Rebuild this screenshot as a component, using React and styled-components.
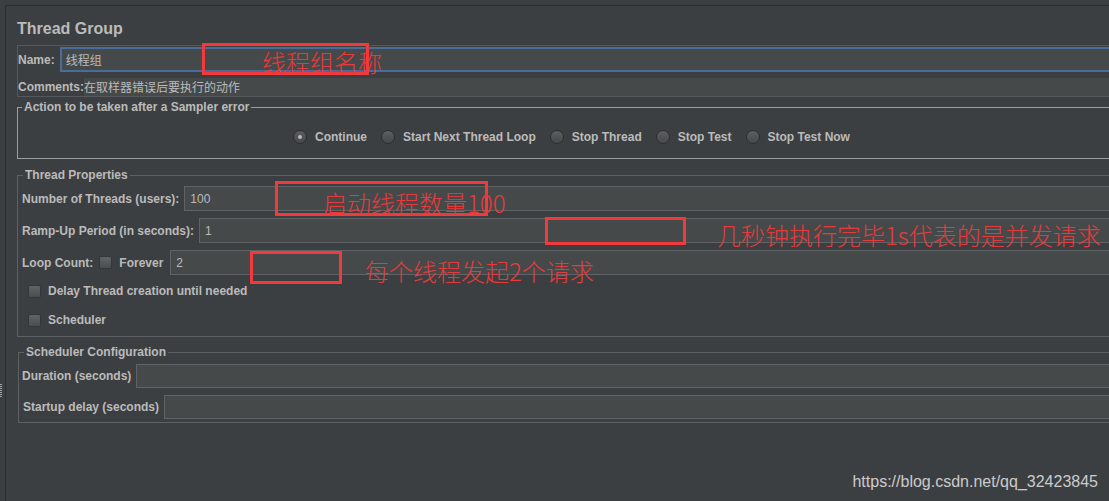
import React from 'react';
import styled, { createGlobalStyle } from 'styled-components';

const UI_FONT = `"Liberation Sans", Arial, "Noto Sans CJK SC", sans-serif`;
const CJK_FONT = `"Noto Sans CJK SC", "Liberation Serif", sans-serif`;

const GlobalStyle = createGlobalStyle`
  html, body { margin: 0; padding: 0; background: #3c3f41; }
  body { font-family: ${UI_FONT}; }
`;

const Screen = styled.div`
  position: relative;
  width: 1109px;
  height: 501px;
  overflow: hidden;
  display: flex;
  background: #3c3f41;
  color: #bbbbbb;
  font: bold 12px/14px ${UI_FONT};
`;

const Gutter = styled.div`
  flex: none;
  width: 5px;
  position: relative;
`;

const Grip = styled.div`
  position: absolute;
  left: 0;
  top: 384px;
  width: 2px;
  height: 13px;
  background: repeating-linear-gradient(to bottom, #a4a6a8 0 1px, transparent 1px 2px);
`;

const Panel = styled.main`
  flex: none;
  margin-top: 5px;
  border-top: 1px solid #2b2d2f;
  border-left: 1px solid #2b2d2f;
  padding: 13px 0 0 11px;
`;

const Column = styled.div`
  width: 1109px;
  display: flex;
  flex-direction: column;
`;

const Title = styled.h1`
  margin: 0;
  font: bold 16px/19px ${UI_FONT};
  color: #bbbbbb;
`;

const NameBox = styled.div`
  margin-top: 7px;
  border: 1px solid #56595c;
  padding-top: 1px;
  display: flex;
  flex-direction: column;
  gap: 6px;
`;

const Row = styled.div`
  display: flex;
  align-items: center;
  height: ${p => p.$h || 25}px;
  gap: ${p => (p.$gap != null ? p.$gap : 5)}px;
  padding-left: ${p => p.$indent || 0}px;
`;

const Label = styled.span`
  flex: none;
  white-space: nowrap;
  font: bold 12px/14px ${UI_FONT};
  color: #bbbbbb;
`;

const Field = styled.div`
  flex: 1;
  align-self: stretch;
  box-sizing: border-box;
  display: flex;
  align-items: center;
  background: #45494a;
  border: ${p => (p.$focused ? '2px solid #4a6d98' : '1px solid #606366')};
  padding-left: ${p => (p.$focused ? 4 : 5)}px;
  margin-left: ${p => p.$shift || 0}px;
  font: 12px/14px ${p => (p.$cjk ? CJK_FONT : UI_FONT)};
  color: #bbbbbb;
`;

const CommentText = styled.div`
  flex: 1;
  align-self: stretch;
  display: flex;
  align-items: center;
  background: #45494a;
  font: 12px/14px ${CJK_FONT};
  color: #bbbbbb;
`;

const Group = styled.fieldset`
  margin: ${p => p.$mt}px 0 0 ${p => p.$ml || 0}px;
  padding: 0;
  min-width: 0;
  border: 1px solid ${p => (p.$light ? '#9b9d9f' : '#5e6164')};
`;

const Legend = styled.legend`
  margin-left: ${p => p.$offset}px;
  padding: 0 2px;
  font: bold 12px/14px ${UI_FONT};
  color: #bbbbbb;
`;

const RadioRow = styled.div`
  display: flex;
  justify-content: center;
  align-items: center;
  gap: 14px;
  height: 20px;
  margin: 13px 0 11px;
`;

const Option = styled.label`
  display: flex;
  align-items: center;
  gap: ${p => (p.$wide ? 8 : 7)}px;
  white-space: nowrap;
`;

const Radio = styled.span`
  flex: none;
  width: 14px;
  height: 14px;
  box-sizing: border-box;
  border-radius: 50%;
  border: 1px solid #2c2e30;
  background: linear-gradient(#5b5f62, #46494c);
  display: grid;
  place-items: center;
  &::after {
    content: '';
    width: 4px;
    height: 4px;
    border-radius: 50%;
    background: ${p => (p.$on ? '#b9b9b9' : 'transparent')};
  }
`;

const Check = styled.span`
  flex: none;
  width: 13px;
  height: 13px;
  box-sizing: border-box;
  border-radius: 2px;
  border: 1px solid #34373a;
  background: linear-gradient(#606467, #4a4e51);
`;

const GroupBody = styled.div`
  display: flex;
  flex-direction: column;
  gap: ${p => p.$gap}px;
  padding: ${p => p.$pad};
`;

const CheckList = styled.div`
  display: flex;
  flex-direction: column;
  gap: 9px;
  margin-top: -1px;
`;

const Mark = styled.div`
  position: absolute;
  left: ${p => p.$x}px;
  top: ${p => p.$y}px;
  width: ${p => p.$w}px;
  height: ${p => p.$h}px;
  box-sizing: border-box;
  border: 3px solid #f2393b;
`;

const Note = styled.span`
  position: absolute;
  left: ${p => p.$x}px;
  top: ${p => p.$y}px;
  white-space: nowrap;
  font: 300 24px/28px ${CJK_FONT};
  color: #e53b3c;
`;

const Watermark = styled.span`
  position: absolute;
  right: 11px;
  top: 473px;
  font: 16px/18px ${UI_FONT};
  color: rgba(236, 236, 236, 0.82);
`;

const actions = ['Continue', 'Start Next Thread Loop', 'Stop Thread', 'Stop Test', 'Stop Test Now'];

export default function App() {
  return (
    <>
      <GlobalStyle />
      <Screen>
        <Gutter>
          <Grip />
        </Gutter>
        <Panel>
          <Column>
            <Title>Thread Group</Title>

            <NameBox>
              <Row>
                <Label>Name:</Label>
                <Field $focused $cjk>线程组</Field>
              </Row>
              <Row $h={18} $gap={0}>
                <Label>Comments:</Label>
                <CommentText>在取样器错误后要执行的动作</CommentText>
              </Row>
            </NameBox>

            <Group $mt={3} $light>
              <Legend $offset={4}>Action to be taken after a Sampler error</Legend>
              <RadioRow>
                {actions.map((a, i) => (
                  <Option key={a} $wide>
                    <Radio $on={i === 0} />
                    {a}
                  </Option>
                ))}
              </RadioRow>
            </Group>

            <Group $mt={9}>
              <Legend $offset={5}>Thread Properties</Legend>
              <GroupBody $gap={7} $pad="4px 0 6px 4px">
                <Row>
                  <Label>Number of Threads (users):</Label>
                  <Field>100</Field>
                </Row>
                <Row>
                  <Label>Ramp-Up Period (in seconds):</Label>
                  <Field>1</Field>
                </Row>
                <Row $gap={6}>
                  <Label>Loop Count:</Label>
                  <Option>
                    <Check />
                    Forever
                  </Option>
                  <Field $shift={1}>2</Field>
                </Row>
                <CheckList>
                  <Row $h={20} $indent={6}>
                    <Option>
                      <Check />
                      Delay Thread creation until needed
                    </Option>
                  </Row>
                  <Row $h={20} $indent={6}>
                    <Option>
                      <Check />
                      Scheduler
                    </Option>
                  </Row>
                </CheckList>
              </GroupBody>
            </Group>

            <Group $mt={8} $ml={1}>
              <Legend $offset={5}>Scheduler Configuration</Legend>
              <GroupBody $gap={7} $pad="5px 0 3px 3px">
                <Row $h={24}>
                  <Label>Duration (seconds)</Label>
                  <Field />
                </Row>
                <Row $h={24} $indent={1}>
                  <Label>Startup delay (seconds)</Label>
                  <Field />
                </Row>
              </GroupBody>
            </Group>
          </Column>
        </Panel>

        <Mark $x={202} $y={43} $w={167} $h={32} />
        <Note $x={262} $y={48}>线程组名称</Note>

        <Mark $x={275} $y={181} $w={213} $h={35} />
        <Note $x={323} $y={189}>启动线程数量100</Note>

        <Mark $x={545} $y={217} $w={141} $h={28} />
        <Note $x={717} $y={221}>几秒钟执行完毕1s代表的是并发请求</Note>

        <Mark $x={250} $y={251} $w={92} $h={33} />
        <Note $x={365} $y={257}>每个线程发起2个请求</Note>

        <Watermark>https://blog.csdn.net/qq_32423845</Watermark>
      </Screen>
    </>
  );
}
